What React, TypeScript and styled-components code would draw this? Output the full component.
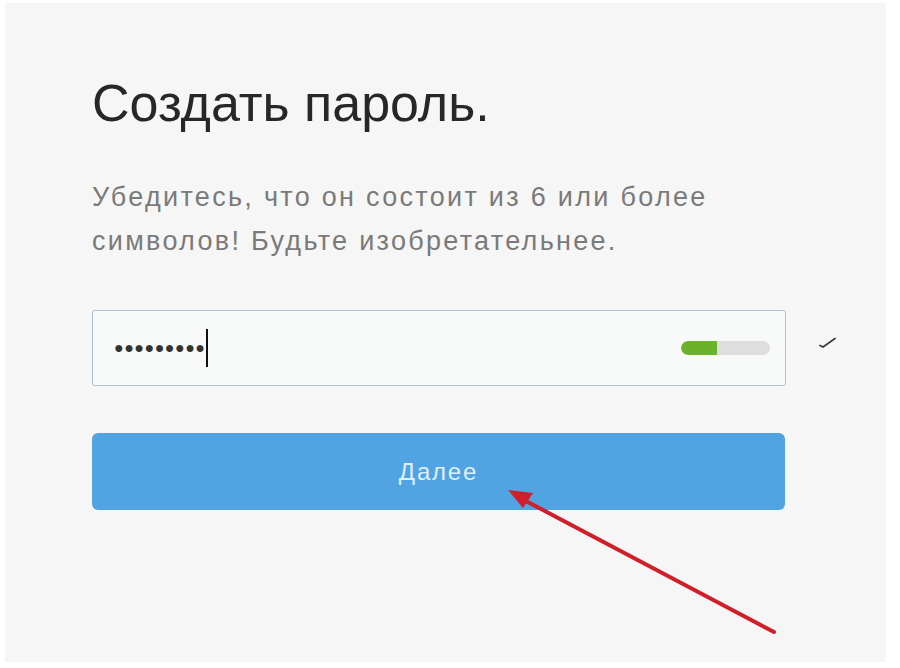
import styled, { createGlobalStyle } from "styled-components";

const GlobalStyle = createGlobalStyle`
  html, body {
    margin: 0;
    padding: 0;
    background: #ffffff;
  }
  body {
    font-family: "Liberation Sans", Arial, sans-serif;
  }
`;

const Page = styled.div`
  position: relative;
  width: 900px;
  height: 668px;
  box-sizing: border-box;
  padding: 3px 14px 6px 5px;
  background: #ffffff;
  overflow: hidden;
`;

const Panel = styled.div`
  height: 100%;
  background: #f6f6f6;
  box-sizing: border-box;
  padding: 70px 0 0 87px;
`;

const Title = styled.h1`
  margin: 0;
  font-size: 52px;
  font-weight: 400;
  line-height: 60px;
  color: #272727;
`;

const Hint = styled.p`
  margin: 42px 0 0;
  font-size: 27px;
  line-height: 44px;
  letter-spacing: 2.3px;
  color: #7a7a7a;
  max-width: 650px;
`;

const FieldRow = styled.div`
  display: flex;
  align-items: center;
  margin-top: 47px;
`;

const Field = styled.div`
  width: 694px;
  height: 76px;
  box-sizing: border-box;
  border: 1px solid #a9c2cf;
  border-radius: 3px;
  background: #f8fafa;
  display: flex;
  align-items: center;
  padding: 0 15px 0 21px;
`;

const Dots = styled.span`
  font-size: 16px;
  letter-spacing: 0.5px;
  color: #333333;
  line-height: 1;
`;

const Caret = styled.span`
  width: 2px;
  height: 38px;
  background: #111111;
  margin-left: 1px;
`;

const Strength = styled.div`
  margin-left: auto;
  width: 89px;
  height: 14px;
  border-radius: 7px;
  background: #dedede;
  overflow: hidden;
`;

const StrengthFill = styled.div`
  height: 100%;
  background: #69b22a;
  border-radius: 7px 0 0 7px;
`;

const CheckIcon = styled.svg`
  margin-left: 32px;
  margin-top: -11px;
  flex-shrink: 0;
`;

const NextButton = styled.button`
  display: block;
  margin-top: 47px;
  width: 693px;
  height: 77px;
  border: none;
  border-radius: 6px;
  background: #52a3e1;
  color: #dff0fb;
  font-family: "Liberation Sans", Arial, sans-serif;
  font-size: 24px;
  letter-spacing: 1.8px;
  cursor: pointer;
`;

const Arrow = styled.svg`
  position: absolute;
  left: 0;
  top: 0;
  pointer-events: none;
`;

const strength = 0.4;

export default function App() {
  return (
    <>
      <GlobalStyle />
      <Page>
        <Panel>
          <Title>Создать пароль.</Title>
          <Hint>
            Убедитесь, что он состоит из 6 или более символов! Будьте
            изобретательнее.
          </Hint>
          <FieldRow>
            <Field>
              <Dots>●●●●●●●●●</Dots>
              <Caret />
              <Strength>
                <StrengthFill style={{ width: `${strength * 100}%` }} />
              </Strength>
            </Field>
            <CheckIcon width="20" height="14" viewBox="0 0 20 14">
              <path
                d="M2 9.5 L5 11 L17 2.5"
                fill="none"
                stroke="#3f3f3f"
                strokeWidth="1.8"
                strokeLinecap="round"
                strokeLinejoin="round"
              />
            </CheckIcon>
          </FieldRow>
          <NextButton>Далее</NextButton>
        </Panel>
        <Arrow width="900" height="668" viewBox="0 0 900 668">
          <line
            x1="774"
            y1="632"
            x2="524"
            y2="500"
            stroke="#cf1f2b"
            strokeWidth="4"
            strokeLinecap="round"
          />
          <polygon points="508,490 533,493 523,508" fill="#cf1f2b" />
        </Arrow>
      </Page>
    </>
  );
}
